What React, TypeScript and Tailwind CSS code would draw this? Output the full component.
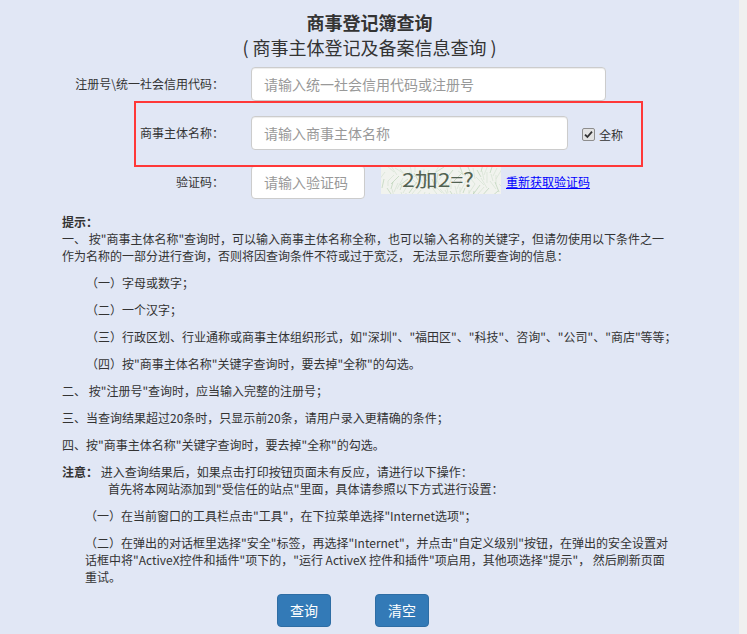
import React from "react";

const strokes = Array.from({ length: 90 }, (_, i) => {
  const x = (i * 37) % 126;
  const y = (i * 11) % 30 - 2;
  const dx = ((i * 7) % 9) - 4;
  const dy = ((i * 5) % 7) + 5;
  return { x1: x, y1: y, x2: x + dx * 2, y2: y + dy };
});

const Captcha = () => (
  <svg width="120" height="28" viewBox="0 0 120 28" className="block">
    <rect width="120" height="28" fill="#f1f3ee" />
    {strokes.map((s, i) => (
      <line
        key={i}
        x1={s.x1}
        y1={s.y1}
        x2={s.x2}
        y2={s.y2}
        stroke={i % 3 === 0 ? "#bcd3b8" : "#d6e2d3"}
        strokeWidth="0.7"
      />
    ))}
    <text
      x="21"
      y="21"
      fontSize="19"
      fill="#526252"
      fontFamily="'Noto Sans CJK SC', sans-serif"
      textLength="72"
      lengthAdjust="spacingAndGlyphs"
    >
      2加2=?
    </text>
  </svg>
);

const inputCls =
  "h-[34px] rounded-[4px] border border-[#ccc] bg-white px-[12px] text-[14px] text-[#555] outline-none placeholder:text-[#999] shadow-[inset_0_1px_1px_rgba(0,0,0,0.075)]";

export default function App() {
  return (
    <div className="flex min-h-screen bg-[#e1e7f5] font-['Noto_Sans_CJK_SC',sans-serif] text-[#333]">
      <div className="relative flex-1 pb-[6px]">
        {/* TITLE */}
        <div className="pt-[10px] text-center">
          <h1 className="text-[18px] font-bold leading-[24px]">商事登记簿查询</h1>
          <p className="text-[18px] leading-[26px]">( 商事主体登记及备案信息查询 )</p>
        </div>

        {/* FORM */}
        <div className="mx-auto mt-[7px] flex w-[615px] flex-col gap-[15px] text-[12px]">
          <div className="flex items-center">
            <label className="w-[162px] text-right">注册号\统一社会信用代码：</label>
            <input className={`ml-[27px] w-[355px] ${inputCls}`} placeholder="请输入统一社会信用代码或注册号" />
          </div>
          <div className="flex items-center">
            <label className="w-[162px] text-right">商事主体名称：</label>
            <input className={`ml-[27px] w-[317px] ${inputCls}`} placeholder="请输入商事主体名称" />
            <span className="ml-[14px] mt-[2px] flex h-[13px] w-[13px] items-center justify-center rounded-[2px] border border-[#8d8d8d] bg-[#e3e3e3]">
              <svg width="9" height="9" viewBox="0 0 9 9">
                <path d="M1 4.6 L3.4 7 L8 1.6" fill="none" stroke="#333" strokeWidth="1.8" />
              </svg>
            </span>
            <span className="ml-[4px] mt-[3px]">全称</span>
          </div>
          <div className="flex items-center">
            <label className="w-[162px] text-right">验证码：</label>
            <input className={`ml-[27px] w-[114px] ${inputCls}`} placeholder="请输入验证码" />
            <div className="ml-[16px] -mt-[4px]">
              <Captcha />
            </div>
            <a href="#" className="ml-[5px] text-[#0000ff] underline">重新获取验证码</a>
          </div>
        </div>

        {/* TIPS */}
        <div className="mx-auto mt-[14px] w-[615px] whitespace-nowrap text-[12px] leading-[17px]">
          <p className="mb-[10px]">
            <b>提示：</b>
            <br />
            一、 按"商事主体名称"查询时，可以输入商事主体名称全称，也可以输入名称的关键字，但请勿使用以下条件之一
            <br />
            作为名称的一部分进行查询，否则将因查询条件不符或过于宽泛， 无法显示您所要查询的信息：
          </p>
          <p className="mb-[10px] pl-[24px]">（一）字母或数字；</p>
          <p className="mb-[10px] pl-[24px]">（二）一个汉字；</p>
          <p className="mb-[10px] pl-[24px]">
            （三）行政区划、行业通称或商事主体组织形式，如"深圳"、"福田区"、"科技"、咨询"、"公司"、"商店"等等；
          </p>
          <p className="mb-[10px] pl-[24px]">（四）按"商事主体名称"关键字查询时，要去掉"全称"的勾选。</p>
          <p className="mb-[10px]">二、 按"注册号"查询时，应当输入完整的注册号；</p>
          <p className="mb-[10px]">三、当查询结果超过20条时，只显示前20条，请用户录入更精确的条件；</p>
          <p className="mb-[10px]">四、按"商事主体名称"关键字查询时，要去掉"全称"的勾选。</p>
          <p className="mb-[10px]">
            <b>注意：</b> 进入查询结果后，如果点击打印按钮页面未有反应，请进行以下操作：
            <br />
            <span className="pl-[46px]">首先将本网站添加到"受信任的站点"里面，具体请参照以下方式进行设置：</span>
          </p>
          <p className="mb-[10px] pl-[23px]">（一）在当前窗口的工具栏点击"工具"，在下拉菜单选择"Internet选项"；</p>
          <p className="pl-[23px]">
            （二）在弹出的对话框里选择"安全"标签，再选择"Internet"，并点击"自定义级别"按钮，在弹出的安全设置对
            <br />
            话框中将"ActiveX控件和插件"项下的，"运行 ActiveX 控件和插件"项启用，其他项选择"提示"， 然后刷新页面
            <br />
            重试。
          </p>
        </div>

        {/* BUTTONS */}
        <div className="mx-auto mt-[9px] flex w-[615px] gap-[44px] pl-[215px]">
          <button className="h-[33px] w-[54px] rounded-[4px] border border-[#2e6da4] bg-[#337ab7] text-[14px] text-white">查询</button>
          <button className="h-[33px] w-[54px] rounded-[4px] border border-[#2e6da4] bg-[#337ab7] text-[14px] text-white">清空</button>
        </div>

        {/* highlight annotation */}
        <div className="pointer-events-none absolute left-[134px] top-[101px] h-[66px] w-[509px] border-2 border-[#ff3838]" />
      </div>
      <div className="w-[8px] bg-[#f0f0f0]" />
    </div>
  );
}
